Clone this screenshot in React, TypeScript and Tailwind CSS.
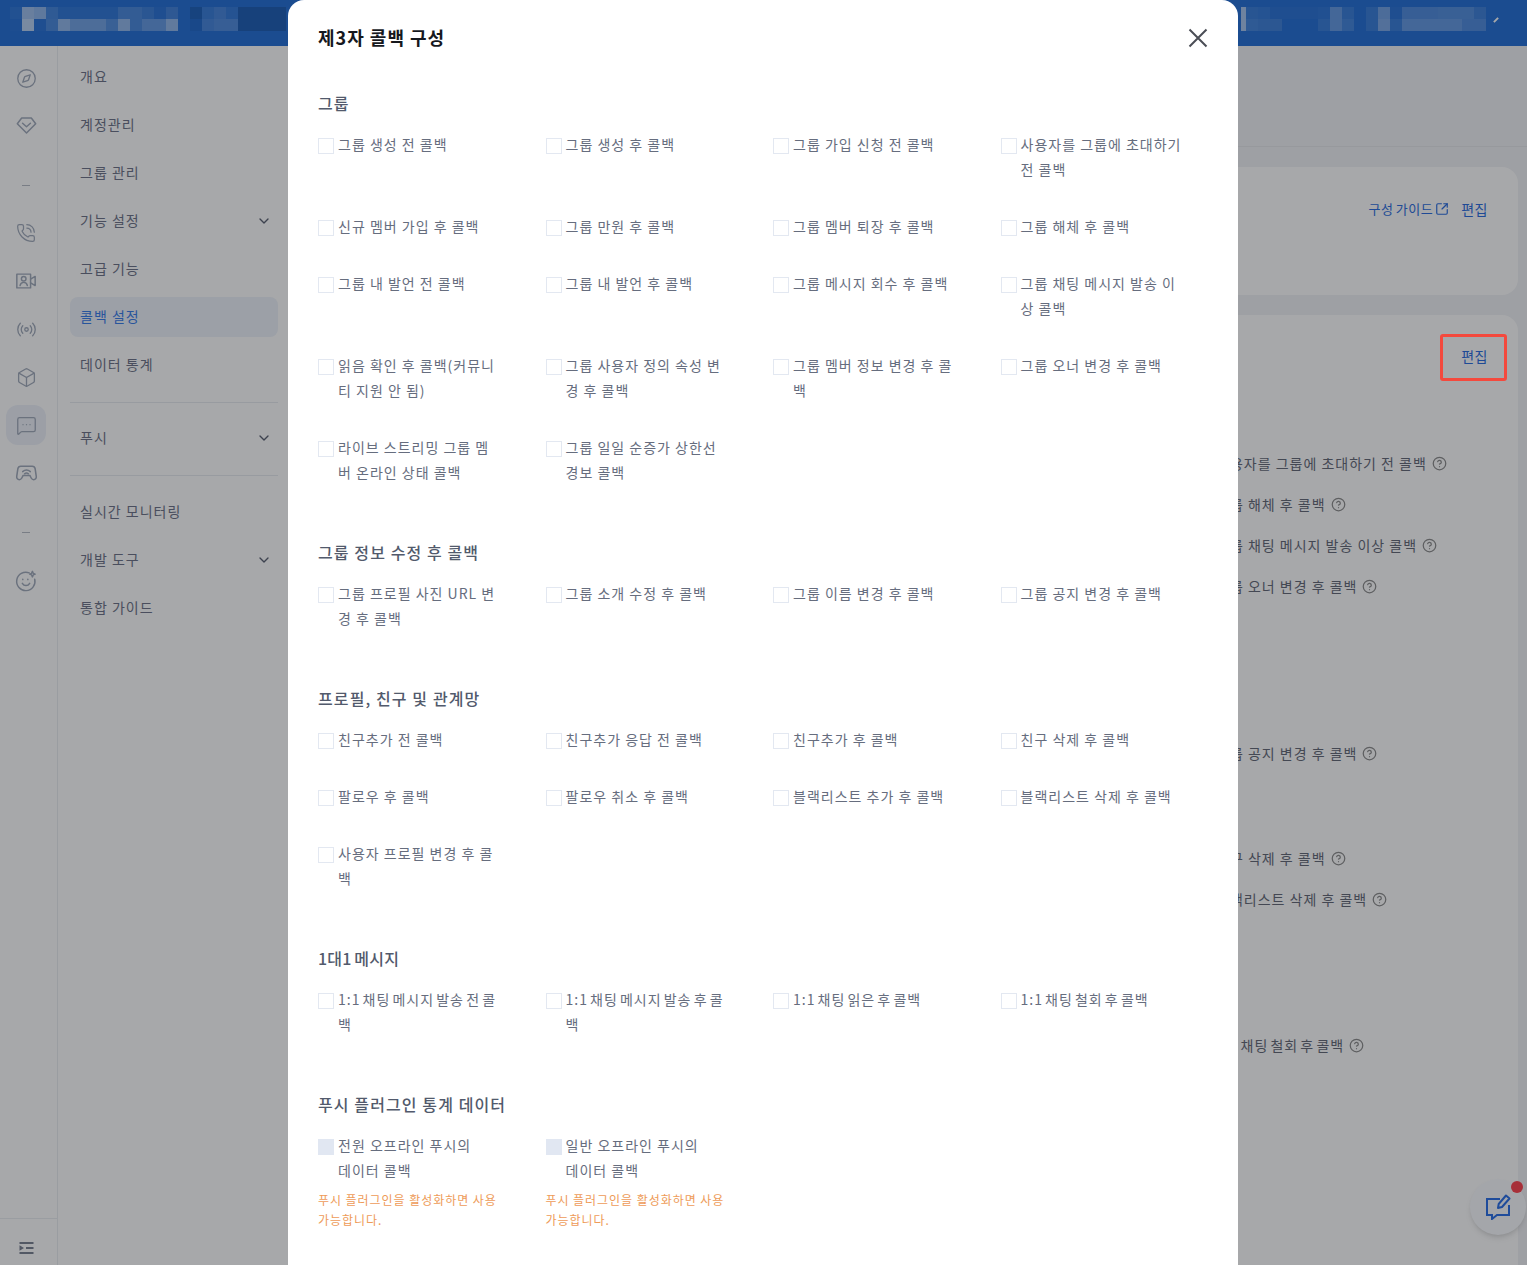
import React from 'react';
import { Box, ChevronDown, CircleHelp, Compass, MessageSquareMore, PhoneCall, Radio, SquareArrowOutUpRight } from 'lucide-react';

// mosaic cells of the blurred header text: >0 white alpha, <0 black alpha
const leftTop = [0.06, 0.56, 0.49, 0.15, 0.06, 0.06, 0.06, 0.06, 0.06, 0.18, 0.18, 0.11, 0.03, 0.14, 0, -0.12, 0.1, 0.16, 0.08, -0.15, -0.15, -0.15, -0.15];
const leftBottom = [0.02, 0.68, 0.03, 0.18, 0.5, 0.36, 0.36, 0.36, 0.22, 0.5, 0.18, 0.3, 0.3, 0.5, 0, -0.05, 0.16, 0.2, 0.2, -0.15, -0.15, -0.15, -0.15];
const rightTop = [0.1, 0.08, 0.03, 0.03, 0.03, 0.03, 0.05, 0.3, 0.1, 0, 0.1, 0.35, 0.03, 0.2, 0.2, 0.2, 0.22, 0.22, 0.22, 0.12];
const rightBottom = [0.15, 0.12, 0.12, 0, 0, 0, 0.1, 0.3, 0.15, 0, 0.1, 0.4, 0.1, 0.3, 0.3, 0.3, 0.3, 0.3, 0.2, 0.2];

const MosaicRow = ({ cells }: { cells: number[] }) => (
  <div className="flex">
    {cells.map((v, i) => (
      <div
        key={i}
        className="w-3 h-3"
        style={{ backgroundColor: v >= 0 ? `rgba(255,255,255,${v})` : `rgba(0,0,0,${-v})` }}
      />
    ))}
  </div>
);

const DiamondIcon = () => (
  <svg width="21" height="21" viewBox="0 0 24 24" fill="none" stroke="currentColor" strokeWidth="1.7" strokeLinejoin="round" strokeLinecap="round">
    <path d="M6.5 3.500h11L22.500 10 12 20.500 1.500 10z" />
    <path d="M7.500 9.500l4.500 4 4.500-4" />
  </svg>
);

const CameraUserIcon = () => (
  <svg width="22" height="22" viewBox="0 0 24 24" fill="none" stroke="currentColor" strokeWidth="1.6" strokeLinejoin="round" strokeLinecap="round">
    <path d="M2 4.500h15v15H2z" />
    <path d="M17 10l5-3v10l-5-3" />
    <circle cx="9.5" cy="9.5" r="2.5" />
    <path d="M5.5 17c.4-2.500 2-3.500 4-3.500s3.600 1 4 3.500" />
  </svg>
);

const GamepadIcon = () => (
  <svg width="23" height="23" viewBox="0 0 24 24" fill="none" stroke="currentColor" strokeWidth="1.6" strokeLinejoin="round" strokeLinecap="round">
    <path d="M6 4.500h12c1.600 0 2.700 1 3 2.500l1.200 8c.3 2.200-1.200 3.500-2.700 3.500-1.200 0-2-.7-2.600-1.800L15.500 14h-7l-1.400 2.700c-.6 1.100-1.400 1.800-2.600 1.800-1.500 0-3-1.300-2.700-3.500L3 7c.3-1.500 1.400-2.500 3-2.500z" />
    <path d="M8 10c2.400-2 5.600-2 8 0" />
    <path d="M10 12.300c1.200-.9 2.800-.9 4 0" />
  </svg>
);

const SmileSparkIcon = () => (
  <svg width="22" height="22" viewBox="0 0 24 24" fill="none" stroke="currentColor" strokeWidth="1.6" strokeLinecap="round" strokeLinejoin="round">
    <path d="M15.500 3.200A10 10 0 1 0 21.500 10" />
    <path d="M8 14.500c1 1.700 2.500 2.500 4 2.500s3-.8 4-2.500" />
    <path d="M8.500 10v.5M14 10v.5" />
    <path d="M19 1.500l.9 2.100 2.100.9-2.100.9-.9 2.100-.9-2.100-2.100-.9 2.100-.9z" />
  </svg>
);

const CollapseIcon = () => (
  <svg width="15" height="12" viewBox="0 0 15 12" fill="currentColor">
    <rect x="0.500" y="0" width="14" height="2" />
    <rect x="7" y="5" width="7.500" height="2" />
    <rect x="0.500" y="10" width="14" height="2" />
    <path d="M0.500 3.200L5 6 0.500 8.800z" />
  </svg>
);

const RailDash = () => <div className="w-2 h-px bg-[#b9bdc6]" />;

const railItem = 'flex items-center justify-center w-10 h-10 text-[#a3acbc]';

const Rail = () => (
  <div className="flex flex-col w-[58px] shrink-0 border-r border-[#eceef2]">
    <div className="flex flex-col items-start flex-1 pt-[12px] pl-[6px]">
      <div className="flex flex-col items-center gap-[7px]">
        <div className={railItem}><Compass size={21} strokeWidth={1.5} /></div>
        <div className={railItem}><DiamondIcon /></div>
      </div>
      <div className="flex items-center justify-center w-10 h-5 mt-[30px] mb-[18px]"><RailDash /></div>
      <div className="flex flex-col items-center gap-2">
        <div className={railItem}><PhoneCall size={20} strokeWidth={1.5} /></div>
        <div className={railItem}><CameraUserIcon /></div>
        <div className={railItem}><Radio size={21} strokeWidth={1.5} /></div>
        <div className={railItem}><Box size={21} strokeWidth={1.5} /></div>
        <div className="flex items-center justify-center w-10 h-10 rounded-xl bg-[#eef2f9] text-[#a3acbc]"><MessageSquareMore size={21} strokeWidth={1.5} /></div>
        <div className={railItem}><GamepadIcon /></div>
      </div>
      <div className="flex items-center justify-center w-10 h-5 mt-[29px] mb-[19px]"><RailDash /></div>
      <div className={railItem}><SmileSparkIcon /></div>
    </div>
    <div className="flex justify-start h-[47px] pt-[23px] pl-[19px] border-t border-[#eceef2] text-[#7d8494]"><CollapseIcon /></div>
  </div>
);

const MenuItem = ({ label, active, arrow }: { label: string; active?: boolean; arrow?: boolean }) => (
  <div className={`flex items-center justify-between h-10 px-[10px] rounded-lg ${active ? 'bg-[#eff3fa] text-[#3d80ea]' : 'text-[#70768a]'}`}>
    <span className="-mt-[2px]">{label}</span>
    {arrow && <ChevronDown size={16} strokeWidth={2} className="text-[#5d6373] mr-[-4px]" />}
  </div>
);

const Menu = () => (
  <div className="w-[230px] shrink-0 pt-[11px] pl-3 pr-[10px] text-sm tracking-[1px]">
    <div className="flex flex-col gap-2">
      <MenuItem label="개요" />
      <MenuItem label="계정관리" />
      <MenuItem label="그룹 관리" />
      <MenuItem label="기능 설정" arrow />
      <MenuItem label="고급 기능" />
      <MenuItem label="콜백 설정" active />
      <MenuItem label="데이터 통계" />
    </div>
    <div className="border-t border-[#e9ebf0] mt-[17px] pt-[15px] pb-[17px]">
      <MenuItem label="푸시" arrow />
    </div>
    <div className="border-t border-[#e9ebf0] pt-4 flex flex-col gap-2">
      <MenuItem label="실시간 모니터링" />
      <MenuItem label="개발 도구" arrow />
      <MenuItem label="통합 가이드" />
    </div>
  </div>
);

const behindRows = [
  { label: '사용자를 그룹에 초대하기 전 콜백', className: 'mt-[87px]' },
  { label: '그룹 해체 후 콜백', className: 'mt-[21px]' },
  { label: '그룹 채팅 메시지 발송 이상 콜백', className: 'mt-[21px]' },
  { label: '그룹 오너 변경 후 콜백', className: 'mt-[21px]' },
  { label: '그룹 공지 변경 후 콜백', className: 'mt-[147px]' },
  { label: '친구 삭제 후 콜백', className: 'mt-[85px]' },
  { label: '블랙리스트 삭제 후 콜백', className: 'mt-[21px]' },
];

const Main = () => (
  <div className="flex-1 min-w-0 flex flex-col bg-[#f2f3f6]">
    <div className="h-[101px] shrink-0 border-b border-[#e6e8ec]" />
    <div className="flex-1 flex flex-col gap-5 pt-5 pl-5 pr-[9px]">
      <div className="h-[128px] shrink-0 rounded-2xl bg-white flex justify-end gap-3 pt-[32px] pr-[30px] text-[#2f6fe0]">
        <span className="flex items-center h-5 gap-[2px] text-[13px] tracking-[0.5px] [word-spacing:-1px]">구성 가이드 <SquareArrowOutUpRight size={14} strokeWidth={2} /></span>
        <span className="h-5 leading-5 text-sm tracking-[0.5px]">편집</span>
      </div>
      <div className="flex-1 rounded-t-2xl bg-white pt-[31px] text-sm tracking-[1px] text-[#676c7a]">
        <div className="flex justify-end pr-[30px] h-5 leading-5 tracking-[0.5px] text-[#2f6fe0]">편집</div>
        <div className="pl-[908px]">
          {behindRows.map(r => (
            <div key={r.label} className={`flex items-center h-5 gap-[5px] whitespace-nowrap ${r.className}`}>
              {r.label}
              <CircleHelp size={15} strokeWidth={2} className="text-[#8f8f8f]" />
            </div>
          ))}
          <div className="flex items-center h-5 gap-[5px] whitespace-nowrap mt-[126px] [word-spacing:-2px]">
            1:1 채팅 철회 후 콜백
            <CircleHelp size={15} strokeWidth={2} className="text-[#8f8f8f]" />
          </div>
        </div>
      </div>
    </div>
  </div>
);

const ChatWidget = () => (
  <div className="absolute left-[1470px] top-[1179px] flex items-center justify-center w-14 h-14 rounded-full bg-[#fbfcff] shadow-md text-[#2f72e8]">
    <svg width="26" height="26" viewBox="0 0 26 26" fill="none" stroke="currentColor" strokeWidth="2">
      <path d="M15 5H2v16h5v4l5-4h12V11" />
      <path d="M21 1.500l3.500 3L17 13l-4 1 .7-4z" strokeLinejoin="round" />
    </svg>
    <div className="absolute top-[2px] right-[3px] w-3 h-3 rounded-full bg-[#ff4752]" />
  </div>
);

type Item = { label: string; tight?: boolean };

const sections: { title: string; tight?: boolean; items: Item[] }[] = [
  {
    title: '그룹',
    items: [
      { label: '그룹 생성 전 콜백' }, { label: '그룹 생성 후 콜백' }, { label: '그룹 가입 신청 전 콜백' }, { label: '사용자를 그룹에 초대하기 전 콜백' },
      { label: '신규 멤버 가입 후 콜백' }, { label: '그룹 만원 후 콜백' }, { label: '그룹 멤버 퇴장 후 콜백' }, { label: '그룹 해체 후 콜백' },
      { label: '그룹 내 발언 전 콜백' }, { label: '그룹 내 발언 후 콜백' }, { label: '그룹 메시지 회수 후 콜백' }, { label: '그룹 채팅 메시지 발송 이상 콜백' },
      { label: '읽음 확인 후 콜백(커뮤니티 지원 안 됨)' }, { label: '그룹 사용자 정의 속성 변경 후 콜백' }, { label: '그룹 멤버 정보 변경 후 콜백' }, { label: '그룹 오너 변경 후 콜백' },
      { label: '라이브 스트리밍 그룹 멤버 온라인 상태 콜백' }, { label: '그룹 일일 순증가 상한선 경보 콜백' },
    ],
  },
  {
    title: '그룹 정보 수정 후 콜백',
    items: [{ label: '그룹 프로필 사진 URL 변경 후 콜백' }, { label: '그룹 소개 수정 후 콜백' }, { label: '그룹 이름 변경 후 콜백' }, { label: '그룹 공지 변경 후 콜백' }],
  },
  {
    title: '프로필, 친구 및 관계망',
    items: [
      { label: '친구추가 전 콜백' }, { label: '친구추가 응답 전 콜백' }, { label: '친구추가 후 콜백' }, { label: '친구 삭제 후 콜백' },
      { label: '팔로우 후 콜백' }, { label: '팔로우 취소 후 콜백' }, { label: '블랙리스트 추가 후 콜백' }, { label: '블랙리스트 삭제 후 콜백' },
      { label: '사용자 프로필 변경 후 콜백' },
    ],
  },
  {
    title: '1대1 메시지',
    tight: true,
    items: [
      { label: '1:1 채팅 메시지 발송 전 콜백', tight: true },
      { label: '1:1 채팅 메시지 발송 후 콜백', tight: true },
      { label: '1:1 채팅 읽은 후 콜백', tight: true },
      { label: '1:1 채팅 철회 후 콜백', tight: true },
    ],
  },
];

const CheckItem = ({ label, tight }: Item) => (
  <label className="flex mb-8 text-sm leading-[25px] tracking-[1px] text-[#666d7e]">
    <span className="w-4 h-4 mt-[6px] mr-1 shrink-0 border border-[#e3e8f1] bg-white" />
    <span className={`w-[163px] ${tight ? '[word-spacing:-2px]' : ''}`}>{label}</span>
  </label>
);

const DisabledItem = ({ label }: Item) => (
  <div className="w-[182px]">
    <div className="flex text-sm leading-[25px] tracking-[1px] text-[#666d7e]">
      <span className="w-4 h-4 mt-[6px] mr-1 shrink-0 bg-[#e1e7f2]" />
      <span className="w-[140px]">{label}</span>
    </div>
    <p className="mt-[7px] text-xs leading-5 tracking-[0.95px] text-[#ee9b58]">푸시 플러그인을 활성화하면 사용 가능합니다.</p>
  </div>
);

const sectionTitle = 'h-6 leading-6 mb-[17px] text-base font-medium text-[#525a6c]';

const Modal = () => (
  <div className="w-[950px] h-full ml-[288px] rounded-t-2xl bg-white pl-[30px] pr-[10px] overflow-hidden">
    <div className="flex items-center justify-between h-[76px] pr-5">
      <h2 className="mb-[2px] text-lg font-bold tracking-[1px] text-[#16181d]">제3자 콜백 구성</h2>
      <svg width="20" height="20" viewBox="0 0 20 20" fill="none" stroke="#4a4d55" strokeWidth="2">
        <path d="M1.500 1.500l17 17M18.500 1.500l-17 17" />
      </svg>
    </div>
    <div className="pt-[15px]">
      {sections.map(s => (
        <div key={s.title} className="mb-[23px]">
          <h3 className={`${sectionTitle} ${s.tight ? 'tracking-[0.2px] [word-spacing:-1px]' : 'tracking-[1.1px]'}`}>{s.title}</h3>
          <div className="grid grid-cols-4">
            {s.items.map(item => <CheckItem key={item.label} {...item} />)}
          </div>
        </div>
      ))}
      <div>
        <h3 className={`${sectionTitle} tracking-[1.1px]`}>푸시 플러그인 통계 데이터</h3>
        <div className="grid grid-cols-4">
          <DisabledItem label="전원 오프라인 푸시의 데이터 콜백" />
          <DisabledItem label="일반 오프라인 푸시의 데이터 콜백" />
        </div>
      </div>
    </div>
  </div>
);

export default function App() {
  return (
    <div className="relative w-[1527px] h-[1265px] overflow-hidden bg-white font-['Noto_Sans_CJK_KR',sans-serif]">
      <div className="flex flex-col h-full">
        <div className="flex h-[46px] shrink-0 bg-[#2872d7] pt-[7px]">
          <div className="w-[288px] pl-[10px] shrink-0">
            <MosaicRow cells={leftTop} />
            <MosaicRow cells={leftBottom} />
          </div>
          <div className="w-[953px] shrink-0" />
          <div className="w-[5px] h-6 shrink-0 bg-white/60" />
          <div className="shrink-0">
            <MosaicRow cells={rightTop} />
            <MosaicRow cells={rightBottom} />
          </div>
          <div className="ml-[7px] mt-[12px] w-[6px] h-[2px] -rotate-45 bg-white" />
        </div>
        <div className="flex flex-1 min-h-0">
          <Rail />
          <Menu />
          <Main />
        </div>
      </div>
      <ChatWidget />

      {/* dialog mask */}
      <div className="absolute inset-0 bg-[rgba(4,6,12,0.35)]">
        <Modal />
      </div>

      {/* annotation box sits over the mask */}
      <div className="absolute left-[1440px] top-[334px] w-[67px] h-[47px] rounded-[3px] border-[3px] border-[#f4493d]" />
    </div>
  );
}
